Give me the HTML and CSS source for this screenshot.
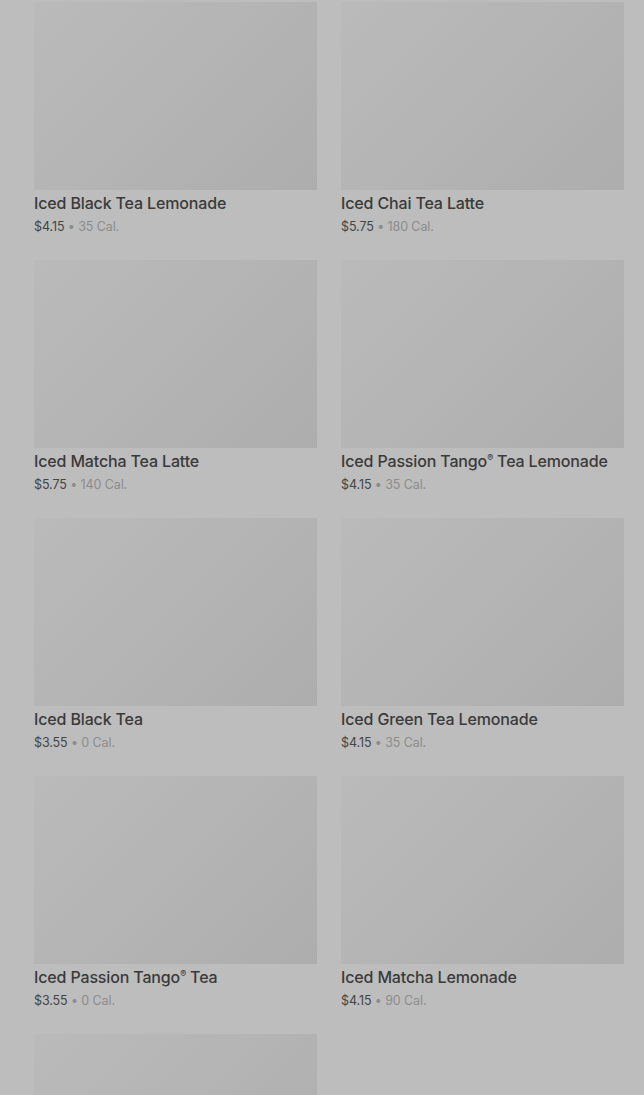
FILE: index.html
```html
<!DOCTYPE html>
<html>
<head>
<meta charset="utf-8">
<title>Iced Teas</title>
<link rel="stylesheet" href="styles.css">
</head>
<body>
<ul class="menu">
    <li class="item"><div class="pic"></div><h3>Iced Black Tea Lemonade</h3><p><b>$4.15</b> • 35 Cal.</p></li>
    <li class="item"><div class="pic"></div><h3>Iced Chai Tea Latte</h3><p><b>$5.75</b> • 180 Cal.</p></li>
    <li class="item"><div class="pic"></div><h3>Iced Matcha Tea Latte</h3><p><b>$5.75</b> • 140 Cal.</p></li>
    <li class="item"><div class="pic"></div><h3>Iced Passion Tango<sup>®</sup> Tea Lemonade</h3><p><b>$4.15</b> • 35 Cal.</p></li>
    <li class="item"><div class="pic"></div><h3>Iced Black Tea</h3><p><b>$3.55</b> • 0 Cal.</p></li>
    <li class="item"><div class="pic"></div><h3>Iced Green Tea Lemonade</h3><p><b>$4.15</b> • 35 Cal.</p></li>
    <li class="item"><div class="pic"></div><h3>Iced Passion Tango<sup>®</sup> Tea</h3><p><b>$3.55</b> • 0 Cal.</p></li>
    <li class="item"><div class="pic"></div><h3>Iced Matcha Lemonade</h3><p><b>$4.15</b> • 90 Cal.</p></li>
    <li class="item"><div class="pic"></div></li>
</ul>
</body>
</html>
```
FILE: styles.css
```css
body,ul,li,h3,p{margin:0;padding:0;}
html,body{background:#bdbdbd;}
body{font-family:Inter,Roboto,"Liberation Sans",sans-serif;color:#3a3a3a;overflow:hidden;height:1095px;}
ul{list-style-type:none;}
.menu{display:grid;grid-template-columns:283px 283px;column-gap:24px;row-gap:24px;padding:2px 20px 0 34px;}
.item{height:234px;}
.pic{height:188px;background:linear-gradient(135deg,#bababa 0%,#b4b4b4 50%,#adadad 100%);}
.item h3{font-size:16px;font-weight:500;line-height:22px;margin-top:2px;color:#3a3a3a;letter-spacing:-0.15px;}
.item h3 sup{font-size:9px;line-height:0;vertical-align:6px;}
.item p{font-size:12.5px;line-height:20px;margin-top:3px;color:#8c8c8c;letter-spacing:-0.1px;}
.item p b{font-weight:400;color:#444;}
```
